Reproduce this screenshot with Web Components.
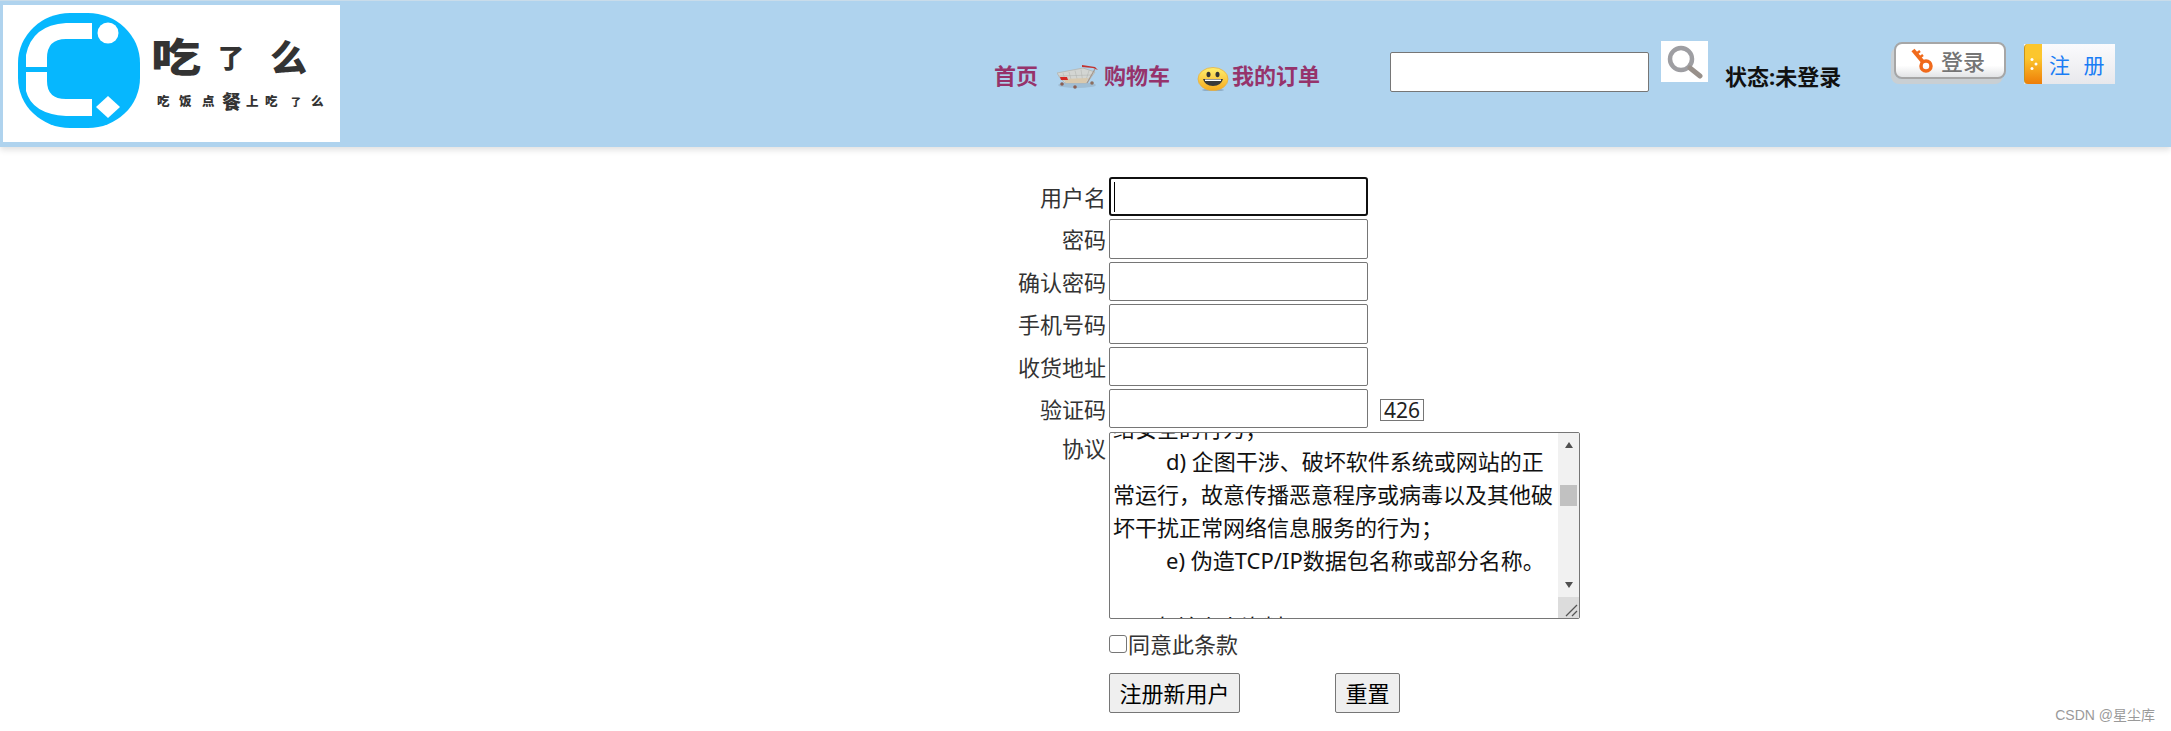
<!DOCTYPE html>
<html lang="zh-CN">
<head>
<meta charset="utf-8">
<title>注册</title>
<style>
  html, body { margin: 0; padding: 0; background: #fff; }
  body { font-family: "Noto Sans", "Noto Sans CJK SC", sans-serif; font-size: 22px; color: #333; }
</style>
</head>
<body>
<site-header></site-header>
<register-form></register-form>
<csdn-mark>CSDN @星尘库</csdn-mark>

<script>
/** `<site-logo>` — the white logo plate with the round blue mark. */
class SiteLogo extends HTMLElement {
  constructor() {
    super();
    this.attachShadow({ mode: 'open' });
    this.shadowRoot.innerHTML = `
      <style>
        :host { display: block; width: 337px; height: 137px; background: #fff; position: relative; }
        svg { display: block; }
        text { font-family: "Noto Sans CJK SC", sans-serif; fill: #333; font-weight: 900; }
      </style>
      <svg width="337" height="137" viewBox="3 4 337 137">
        <rect x="18" y="12" width="122" height="115" rx="52" ry="50" fill="#06b7fe"/>
        <path fill="#fff" d="M92 22H66Q32 24 26 54V66H47V57Q47 38 66 38H92ZM26 71V90Q32 113 66 115H92V98H66Q47 98 47 80V71Z"/>
        <circle cx="108" cy="32" r="10.5" fill="#fff"/>
        <path fill="#fff" d="M108 95l12 11-12 11-12-11z"/>
        <text transform="translate(151 71) scale(1 .8)" font-size="50">吃</text>
        <text x="218" y="67" font-size="26">了</text>
        <text x="270" y="71" font-size="37">么</text>
        <text x="157" y="105" font-size="12.5">吃</text>
        <text x="179" y="105" font-size="12.5">饭</text>
        <text x="202" y="105" font-size="12.5">点</text>
        <text x="222" y="108" font-size="19">餐</text>
        <text x="246" y="105" font-size="12.5">上</text>
        <text x="265" y="105" font-size="12.5">吃</text>
        <text x="291" y="105" font-size="10">了</text>
        <text x="311" y="105" font-size="12.5">么</text>
      </svg>`;
  }
}

/** `<nav-link>` — bold plum link with an optional icon in the `icon` slot. */
class NavLink extends HTMLElement {
  constructor() {
    super();
    this.attachShadow({ mode: 'open' });
    this.shadowRoot.innerHTML = `
      <style>
        :host { display: flex; align-items: center; gap: 5px; color: #96336b; font-weight: 700; font-size: 22px; line-height: 30px; white-space: nowrap; }
      </style>
      <slot name="icon"></slot><slot></slot>`;
  }
}

/** `<site-header>` — light blue bar: logo, nav, search, status, login/register. */
class SiteHeader extends HTMLElement {
  constructor() {
    super();
    this.attachShadow({ mode: 'open' });
    this.shadowRoot.innerHTML = `
      <style>
        :host { display: flex; box-sizing: border-box; height: 147px; padding: 4px 0 6px 3px; background: #afd3ee; border-top: 1px solid #c9dcea; box-shadow: 0 3px 6px rgba(0,0,0,.12); font-family: "Noto Sans", "Noto Sans CJK SC", sans-serif; }
        .nav { display: flex; align-items: center; margin: 46px 0 0 654px; height: 48px; }
        .cart { margin-left: 19px; }
        .smile { margin-left: 27px; }
        input { box-sizing: border-box; width: 259px; height: 40px; margin: 47px 0 0 70px; border: 1px solid #767676; border-radius: 2px; background: #fff; padding: 0; }
        .search { width: 47px; height: 41px; margin: 36px 0 0 12px; background: #fff; }
        .search svg { display: block; filter: blur(.5px); }
        .status { margin: 53px 0 0 17px; width: 116px; font-size: 22px; line-height: 36px; font-weight: 700; color: #111; white-space: nowrap; }
        .login { box-sizing: border-box; width: 115px; height: 42px; margin: 37px 0 0 50px; padding-left: 3px; }
        .login-face { box-sizing: border-box; display: flex; align-items: center; width: 112px; height: 37px; padding-left: 14px; gap: 7px; border: 2px solid #a6a6a6; border-radius: 8px; background: linear-gradient(#fff 65%, #e2e4e6); box-shadow: -3px 5px 0 #c9cfd3; color: #757575; font-size: 22px; font-weight: 500; line-height: 1; }
        .login-face svg { flex: none; }
        .reg { display: flex; align-items: center; box-sizing: border-box; width: 91px; height: 40px; margin: 39px 0 0 18px; background: linear-gradient(#fbfbfd, #e8e8ec); color: #1a7df5; font-size: 21px; word-spacing: 8px; }
        .reg-tab { width: 18px; height: 40px; box-sizing: border-box; border-left: 1px solid #c8941a; border-radius: 4px 0 0 4px; background: linear-gradient(#fcc62d 35%, #ee7d08); margin-right: 7px; flex: none; }
        .reg-tab svg { display: block; }
      </style>
      <site-logo></site-logo>
      <div class="nav">
        <nav-link>首页</nav-link>
        <nav-link class="cart">
          <svg slot="icon" width="42" height="28" viewBox="0 0 42 28">
            <ellipse cx="20" cy="24" rx="19" ry="3" fill="#8fa5b5" opacity=".45"/>
            <path d="M0 12L26 7l12 4-8 11H8l-5-5z" fill="#d3d5d2" stroke="#b4b5b0" stroke-width=".8"/>
            <path d="M6 12l3 10M12 11l3 11M18 9.500l3 12.500M24 8.500l2 13.500M32 9.500L28 22M2 15l33-1M5 19l27-1" stroke="#aeb0ad" stroke-width=".5" fill="none"/>
            <path d="M7 18l24-1-2 5H9z" fill="#d9c9ae"/>
            <path d="M3 16h7l1 3H4z" fill="#d42a24"/>
            <path d="M25 4l13 2 3 3-5-2-11-1z" fill="#c2332f"/>
            <path d="M38 8l-8 14" stroke="#a2968e" stroke-width="1.200"/>
            <circle cx="5" cy="23" r="1.800" fill="#8c5e52"/><circle cx="18" cy="26" r="1.800" fill="#8c5e52"/><circle cx="35" cy="22" r="1.800" fill="#8c6e60"/>
          </svg>购物车</nav-link>
        <nav-link class="smile">
          <svg slot="icon" width="32" height="32" viewBox="0 0 32 32" style="margin-right:-2px">
            <defs><linearGradient id="sg" x1="0" y1="0" x2="0" y2="1"><stop offset="0" stop-color="#fff070"/><stop offset="1" stop-color="#f7aa1c"/></linearGradient></defs>
            <ellipse cx="16" cy="31" rx="11" ry="1.500" fill="#6f8aa0" opacity=".5"/>
            <ellipse cx="16" cy="20" rx="15" ry="11.500" fill="url(#sg)" stroke="#e6b044" stroke-width=".8"/>
            <ellipse cx="11.500" cy="15.500" rx="2" ry="2.800" fill="#333"/><ellipse cx="20.500" cy="15.500" rx="2" ry="2.800" fill="#333"/>
            <path d="M6 20h20q-2 7-10 7T6 20z" fill="#3a3a3a"/><path d="M8 20.500h16v1.500H8z" fill="#fff"/>
          </svg>我的订单</nav-link>
      </div>
      <input type="text" aria-label="搜索">
      <div class="search">
        <svg width="47" height="41" viewBox="0 0 47 41">
          <circle cx="20" cy="18" r="11" fill="none" stroke="#9e9ea2" stroke-width="4.500"/>
          <path d="M29 27l10 8" stroke="#98908a" stroke-width="5" stroke-linecap="round"/>
        </svg>
      </div>
      <div class="status">状态:未登录</div>
      <div class="login">
        <div class="login-face">
          <svg width="24" height="28" viewBox="0 0 24 28">
            <path d="M3 3l10 12" stroke="#f06a1c" stroke-width="4"/>
            <path d="M6 7l4-3M9 11l4-3" stroke="#f06a1c" stroke-width="2.500"/>
            <circle cx="16" cy="19" r="5" fill="none" stroke="#f06a1c" stroke-width="3.500"/>
          </svg>
          <span>登录</span>
        </div>
      </div>
      <div class="reg">
        <div class="reg-tab"><svg width="17" height="40" viewBox="0 0 17 40"><circle cx="7" cy="15.500" r="1.500" fill="#fff"/><circle cx="11" cy="20" r="1.500" fill="#fff"/><circle cx="7" cy="24.500" r="1.500" fill="#fff"/></svg></div>
        <span>注 册</span>
      </div>`;
  }
}

/** `<form-row>` — right aligned label, then the field in the default slot. */
class FormRow extends HTMLElement {
  static get observedAttributes() {
    return ['label'];
  }

  constructor() {
    super();
    this.attachShadow({ mode: 'open' });
    this.shadowRoot.innerHTML = `
      <style>
        :host { display: grid; grid-template-columns: 1106px 1fr; column-gap: 3px; }
        .label { text-align: right; color: #333; font-size: 22px; line-height: 30px; padding-top: var(--label-top, 5px); white-space: nowrap; }
        .field { display: flex; align-items: flex-start; min-width: 0; }
      </style>
      <div class="label"></div>
      <div class="field"><slot></slot></div>`;
  }

  attributeChangedCallback(name, old, value) {
    this.shadowRoot.querySelector('.label').textContent = value;
  }
}

/** `<text-field>` — native looking input; `focused` draws the ring and caret. */
class TextField extends HTMLElement {
  constructor() {
    super();
    this.attachShadow({ mode: 'open' });
    this.shadowRoot.innerHTML = `
      <style>
        :host { display: block; position: relative; width: 259px; height: 39.4px; }
        input { display: block; box-sizing: border-box; width: 100%; height: 100%; margin: 0; padding: 0; border: 1px solid #767676; border-radius: 2px; background: #fff; outline: none; }
        :host([focused]) input { border: 2px solid #101010; border-radius: 3px; }
        .caret { display: none; position: absolute; left: 5px; top: 5px; width: 1px; height: 30px; background: #000; }
        :host([focused]) .caret { display: block; }
      </style>
      <input type="text"><span class="caret"></span>`;
  }
}

/** `<terms-box>` — scrolled agreement text with a painted classic scrollbar. */
class TermsBox extends HTMLElement {
  constructor() {
    super();
    this.attachShadow({ mode: 'open' });
    this.shadowRoot.innerHTML = `
      <style>
        :host { display: flex; box-sizing: border-box; width: 471px; height: 187px; margin-top: .6px; border: 1px solid #767676; border-radius: 2px; background: #fff; overflow: hidden; }
        .text { flex: 1; min-width: 0; overflow: hidden; padding: 0 3px; }
        .inner { margin-top: -21px; font-size: 22px; line-height: 33px; color: #111; }
        .inner div { height: 33px; white-space: nowrap; }
        .in { padding-left: 53px; }
        .bar { display: flex; flex-direction: column; align-items: center; width: 21px; flex: none; background: #f1f1f1; }
        .arrow { height: 24px; display: flex; align-items: center; justify-content: center; flex: none; }
        .track { flex: 1; position: relative; width: 100%; }
        .thumb { position: absolute; left: 2px; right: 2px; top: 28px; height: 21px; background: #c1c1c1; }
        .corner { flex: none; width: 100%; height: 21px; background: #dcdcdc; }
        .corner svg { display: block; }
      </style>
      <div class="text"><div class="inner">
        <div>络安全的行为；</div>
        <div class="in">d) 企图干涉、破坏软件系统或网站的正</div>
        <div>常运行，故意传播恶意程序或病毒以及其他破</div>
        <div>坏干扰正常网络信息服务的行为；</div>
        <div class="in">e) 伪造TCP/IP数据包名称或部分名称。</div>
        <div>&nbsp;</div>
        <div>4、 有关个人资料</div>
      </div></div>
      <div class="bar">
        <div class="arrow"><svg width="10" height="6" viewBox="0 0 10 6"><path d="M5 0l4 6H1z" fill="#505050"/></svg></div>
        <div class="track"><div class="thumb"></div></div>
        <div class="arrow"><svg width="10" height="6" viewBox="0 0 10 6"><path d="M5 6L1 0h8z" fill="#505050"/></svg></div>
        <div class="corner"><svg width="21" height="21" viewBox="0 0 21 21"><path d="M8 19L19 8M14 19l5-5" stroke="#555" stroke-width="1.300"/></svg></div>
      </div>`;
  }
}

/** `<push-btn>` — grey native style button. */
class PushBtn extends HTMLElement {
  constructor() {
    super();
    this.attachShadow({ mode: 'open' });
    this.shadowRoot.innerHTML = `
      <style>
        :host { display: block; }
        button { box-sizing: border-box; display: block; height: 40px; padding: 0 9.5px; margin: 0; border: 1px solid #767676; border-radius: 2px; background: #efefef; color: #000; font: 22px/1 "Noto Sans", "Noto Sans CJK SC", sans-serif; white-space: nowrap; }
      </style>
      <button type="button"><slot></slot></button>`;
  }
}

/** `<register-form>` — the registration rows below the header. */
class RegisterForm extends HTMLElement {
  constructor() {
    super();
    this.attachShadow({ mode: 'open' });
    this.shadowRoot.innerHTML = `
      <style>
        :host { display: flex; flex-direction: column; gap: 3px; padding-top: 30px; font-family: "Noto Sans", "Noto Sans CJK SC", sans-serif; }
        .code { margin-left: 12px; margin-top: 10px; box-sizing: border-box; height: 22px; width: 44px; border: 1px solid #767676; color: #222; font-size: 21px; line-height: 20px; text-align: center; }
        .agree { display: flex; align-items: center; gap: 1px; margin-top: 7px; color: #333; font-size: 22px; line-height: 30px; }
        .box { box-sizing: border-box; width: 18px; height: 18px; border: 1px solid #767676; border-radius: 3px; background: #fff; }
        .actions { display: flex; gap: 95px; margin-top: 11px; }
      </style>
      <form-row label="用户名"><text-field focused></text-field></form-row>
      <form-row label="密码"><text-field></text-field></form-row>
      <form-row label="确认密码"><text-field></text-field></form-row>
      <form-row label="手机号码"><text-field></text-field></form-row>
      <form-row label="收货地址"><text-field></text-field></form-row>
      <form-row label="验证码"><text-field></text-field><span class="code">426</span></form-row>
      <form-row label="协议" style="--label-top:2px"><terms-box></terms-box></form-row>
      <form-row>
        <div class="agree"><span class="box"></span>同意此条款</div>
      </form-row>
      <form-row>
        <div class="actions"><push-btn>注册新用户</push-btn><push-btn>重置</push-btn></div>
      </form-row>`;
  }
}

/** `<csdn-mark>` — the small watermark in the bottom right corner. */
class CsdnMark extends HTMLElement {
  constructor() {
    super();
    this.attachShadow({ mode: 'open' });
    this.shadowRoot.innerHTML = `
      <style>
        :host { position: absolute; right: 16px; top: 705px; color: #9a9a9a; font-size: 14px; line-height: 20px; font-family: "Liberation Sans", "Noto Sans CJK SC", sans-serif; }
      </style>
      <slot></slot>`;
  }
}

customElements.define('site-logo', SiteLogo);
customElements.define('nav-link', NavLink);
customElements.define('site-header', SiteHeader);
customElements.define('form-row', FormRow);
customElements.define('text-field', TextField);
customElements.define('terms-box', TermsBox);
customElements.define('push-btn', PushBtn);
customElements.define('register-form', RegisterForm);
customElements.define('csdn-mark', CsdnMark);
</script>
</body>
</html>
